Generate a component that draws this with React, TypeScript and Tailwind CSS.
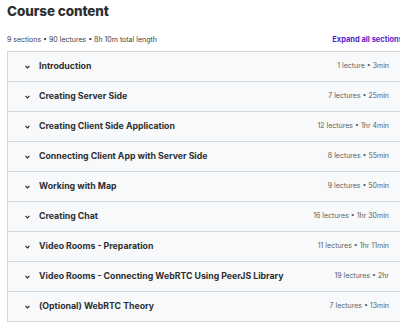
const sections = [
  { title: "Introduction", meta: "1 lecture • 3min" },
  { title: "Creating Server Side", meta: "7 lectures • 25min" },
  { title: "Creating Client Side Application", meta: "12 lectures • 1hr 4min" },
  { title: "Connecting Client App with Server Side", meta: "8 lectures • 55min" },
  { title: "Working with Map", meta: "9 lectures • 50min" },
  { title: "Creating Chat", meta: "16 lectures • 1hr 30min" },
  { title: "Video Rooms - Preparation", meta: "11 lectures • 1hr 11min" },
  { title: "Video Rooms - Connecting WebRTC Using PeerJS Library", meta: "19 lectures • 2hr" },
  { title: "(Optional) WebRTC Theory", meta: "7 lectures • 13min" },
];

export default function App() {
  return (
    <div
      className="h-[322px] w-[400px] overflow-hidden bg-white text-[#2d2f31]"
      style={{ fontFamily: "Inter, 'Noto Sans', sans-serif" }}
    >
      <div className="w-[403px] pl-[7px]">
        <h2 className="pt-[3px] text-[13.5px] font-extrabold leading-[17px] tracking-[-0.1px]">
          Course content
        </h2>
        <div className="mt-[14px] flex h-[12px] items-center justify-between">
          <span className="text-[7px] text-[#3e4143]">
            9 sections • 90 lectures • 8h 10m total length
          </span>
          <span className="text-[7.5px] font-bold text-[#5624d0]">Expand all sections</span>
        </div>
        <div className="mt-[5px] border border-b-0 border-[#d1d7dc]">
          {sections.map((s) => (
            <SectionRow key={s.title} title={s.title} meta={s.meta} />
          ))}
        </div>
      </div>
    </div>
  );
}

function SectionRow({ title, meta }: { title: string; meta: string }) {
  return (
    <div className="flex h-[30px] items-center border-b border-[#d1d7dc] bg-[#f7f9fa] pr-[13px] pl-[17px]">
      <svg width="5" height="4" viewBox="0 0 5 4" className="shrink-0">
        <path d="M0.6 1 L2.5 2.9 L4.4 1" fill="none" stroke="#2d2f31" strokeWidth="1.1" />
      </svg>
      <span className="ml-[9px] flex-1 truncate text-[8.75px] font-bold">{title}</span>
      <span className="ml-2 shrink-0 text-[7px] text-[#5b5f62]">{meta}</span>
    </div>
  );
}
